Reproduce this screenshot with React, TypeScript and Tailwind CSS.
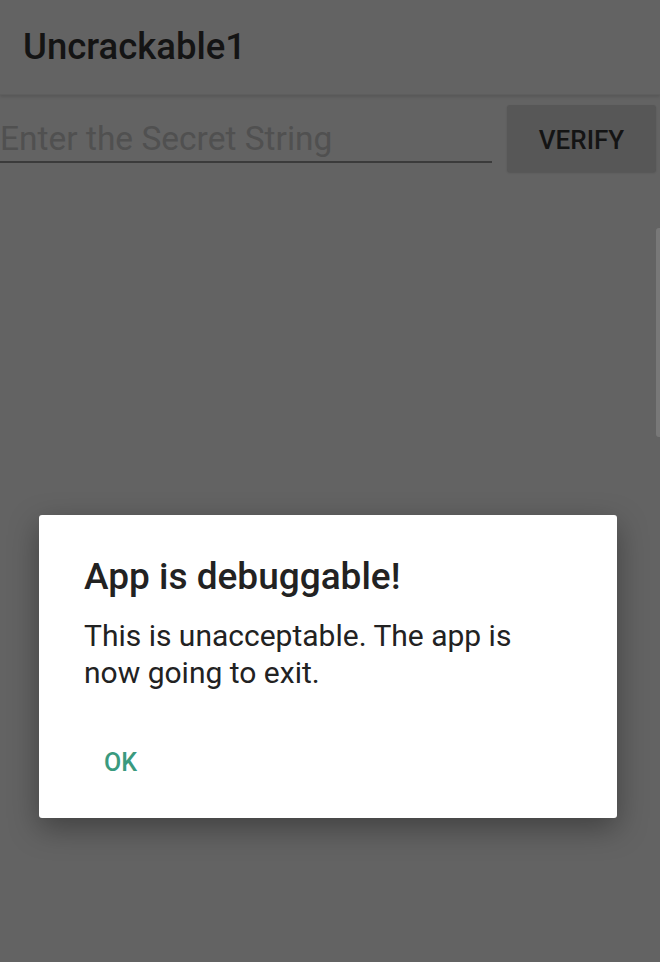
import React from "react";

export default function App() {
  return (
    <div
      className="relative w-[660px] h-[962px] overflow-hidden bg-[#636363]"
      style={{ fontFamily: "Roboto, 'Noto Sans', sans-serif" }}
    >
      <div className="h-[95px] flex items-start pt-[29px] pl-[23px] shadow-[0_2px_3px_rgba(0,0,0,0.12)] border-b border-[#5e5e5e]">
        <span className="text-[36.5px] font-medium text-[#141414] leading-none">
          Uncrackable1
        </span>
      </div>
      <div className="flex items-start mt-[10px]">
        <div className="w-[492px] h-[58px] border-b-2 border-[#3b3b3b] flex items-end pb-[6px]">
          <span className="text-[33.5px] text-[#505050] leading-none">
            Enter the Secret String
          </span>
        </div>
        <div className="ml-[15px] w-[149px] h-[67px] rounded-[3px] bg-[#575757] flex items-center justify-center pt-[3px] shadow-[0_1px_2px_rgba(0,0,0,0.15)]">
          <span className="text-[26px] font-medium text-[#141414] leading-none">
            VERIFY
          </span>
        </div>
      </div>

      <div className="absolute right-0 top-[228px] h-[209px] w-[4px] rounded-l-[3px] bg-[#787878]" />

      <div className="absolute left-[39px] top-[515px] w-[578px] h-[303px] rounded-[3px] bg-white shadow-[0_10px_30px_rgba(0,0,0,0.35)] flex flex-col pl-[45px] pr-[60px]">
        <div className="mt-[40px] text-[37px] font-medium text-[#222222] leading-[44px]">
          App is debuggable!
        </div>
        <div className="mt-[19px] text-[30px] text-[#222222] leading-[36.5px]">
          This is unacceptable. The app is now going to exit.
        </div>
        <div className="mt-[59px] ml-[20px] text-[25px] font-medium text-[#3a9a7e] leading-none">
          OK
        </div>
      </div>
    </div>
  );
}
